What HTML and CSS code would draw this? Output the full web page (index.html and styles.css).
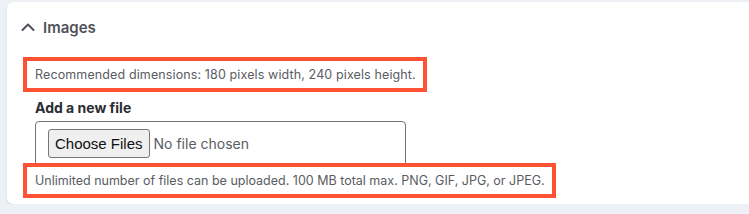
FILE: index.html
```html
<!DOCTYPE html>
<html lang="en">
  <head>
    <meta charset="UTF-8" />
    <meta name="viewport" content="width=device-width, initial-scale=1.0" />
    <title>Images</title>
    <link rel="stylesheet" href="styles.css">
  </head>
  <body>
    <div class="card">
      <div class="card-header">
        <svg class="chevron" width="14" height="8" viewBox="0 0 14 8">
          <polyline points="1.5,7 7,1.5 12.5,7" fill="none" stroke="#4f5158" stroke-width="2" stroke-linecap="round" stroke-linejoin="round" />
        </svg>
        <span class="card-title">Images</span>
      </div>

      <div class="card-body">
        <p class="hint hint-top">Recommended dimensions: 180 pixels width, 240 pixels height.</p>

        <label class="field-label">Add a new file</label>
        <div class="file-box">
          <button class="file-button" type="button">Choose Files</button>
          <span class="file-status">No file chosen</span>
        </div>

        <p class="hint hint-bottom">Unlimited number of files can be uploaded. 100 MB total max. PNG, GIF, JPG, or JPEG.</p>
      </div>
    </div>
  </body>
</html>
```

FILE: styles.css
```css
body {
  font-family: Inter, "Noto Sans", sans-serif;
  background-color: #edf0f4;
  margin: 0;
  padding: 0;
}
.card {
  margin: 2px 0 0 7px;
  padding: 15px 0 6px 14px;
  background-color: #fff;
  border-radius: 6px 0 0 6px;
  box-shadow: 0 2px 3px rgba(0, 0, 0, 0.1);
}
.card-header {
  display: flex;
  align-items: center;
  height: 20px;
  gap: 8px;
}
.chevron {
  display: block;
}
.card-title {
  font-size: 15px;
  font-weight: 600;
  color: #4f5158;
}
.card-body {
  padding: 20px 0 0 14px;
}
.hint {
  display: inline-block;
  margin: 0 0 0 -12px;
  padding: 4px 7px 4px 8px;
  border: 4px solid #ff5235;
  font-size: 12.5px;
  line-height: 19px;
  color: #5a5c63;
  position: relative;
}
.hint-top {
  letter-spacing: 0.12px;
}
.field-label {
  display: block;
  margin-top: 7px;
  font-size: 14px;
  font-weight: 700;
  line-height: 18px;
  color: #2b2d33;
}
.file-box {
  width: 357px;
  margin-top: 4px;
  padding: 7px 0 8px 12px;
  border: 1px solid #74767c;
  border-radius: 4px;
  display: flex;
  align-items: center;
  gap: 4px;
}
.file-button {
  font-family: "Liberation Sans", Arial, sans-serif;
  font-size: 15px;
  color: #111;
  height: 29px;
  padding: 0 6px;
  background-color: #efefef;
  border: 1px solid #767676;
  border-radius: 3px;
}
.file-status {
  font-size: 14px;
  color: #5a5c63;
}
.hint-bottom {
  margin-top: -4px;
}
```
